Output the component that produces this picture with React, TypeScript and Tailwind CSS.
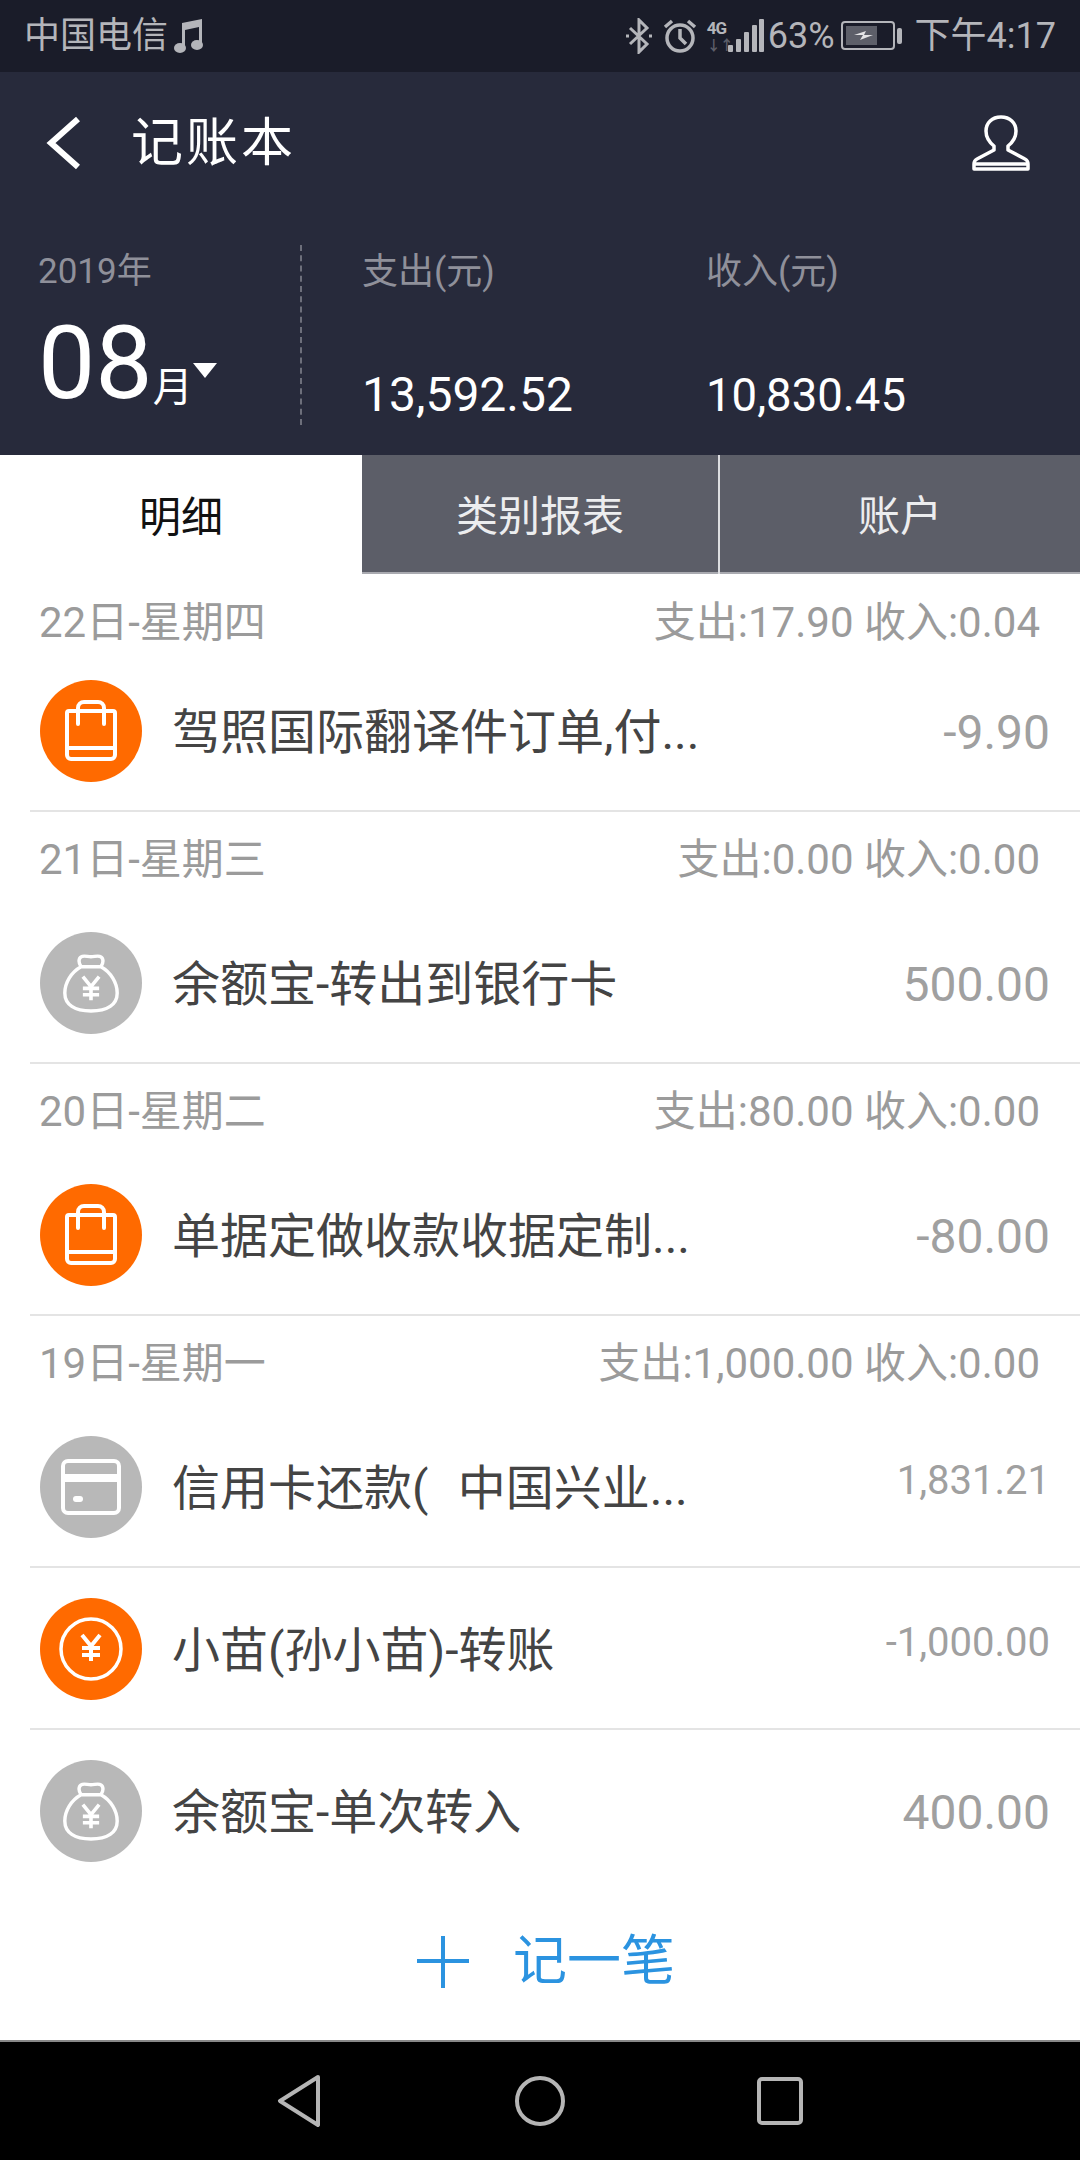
const cjk = { fontFamily: 'Roboto, "Noto Sans CJK SC", sans-serif' };

const BagIcon = () => (
  <svg width="60" height="62" viewBox="0 0 60 62" fill="none" stroke="#fff" strokeWidth="4" strokeLinejoin="round" strokeLinecap="round">
    <path d="M8 11h44a2 2 0 0 1 2 2v42a4 4 0 0 1-4 4H10a4 4 0 0 1-4-4V13a2 2 0 0 1 2-2z" />
    <path d="M6 48h48" />
    <path d="M17 24V8a6 6 0 0 1 6-6h14a6 6 0 0 1 6 6v16" />
  </svg>
);

const YenGlyph = ({ x, y }: { x: number; y: number }) => (
  <g transform={`translate(${x} ${y})`} stroke="#fff" strokeWidth="4" fill="none">
    <path d="M2 0l9 11 9-11M11 11v15M2 13h18M2 20h18" />
  </g>
);

const MoneyBagIcon = () => (
  <svg width="56" height="60" viewBox="0 0 62 66" fill="none" stroke="#fff" strokeWidth="3.8" strokeLinejoin="round">
    <path d="M20 15c-3-4-3-9 0-11 3-2 7 0 11 0s8-2 11 0c3 2 3 7 0 11" />
    <path d="M20 15C9 21 2 33 2 44c0 13 11 20 29 20s29-7 29-20c0-11-7-23-18-29z" />
    <YenGlyph x={20} y={26} />
  </svg>
);

const CardIcon = () => (
  <svg width="60" height="56" viewBox="0 0 60 56" fill="none">
    <rect x="2" y="2" width="56" height="52" rx="5" stroke="#fff" strokeWidth="4" />
    <path d="M2 19h56" stroke="#fff" strokeWidth="8" />
    <rect x="12" y="37" width="10" height="6" rx="3" fill="#fff" />
  </svg>
);

const CoinIcon = () => (
  <svg width="66" height="66" viewBox="0 0 66 66" fill="none">
    <circle cx="33" cy="33" r="30" stroke="#fff" strokeWidth="3.5" />
    <YenGlyph x={22} y={19} />
  </svg>
);

type Row = {
  title: string;
  amount: string;
  small?: boolean;
  kind: "bag" | "money" | "card" | "coin";
};

type Group = {
  date: string;
  summary: string;
  first?: boolean;
  rows: Row[];
};

const groups: Group[] = [
  {
    date: "22日-星期四",
    summary: "支出:17.90 收入:0.04",
    first: true,
    rows: [{ title: "驾照国际翻译件订单,付...", amount: "-9.90", kind: "bag" }],
  },
  {
    date: "21日-星期三",
    summary: "支出:0.00 收入:0.00",
    rows: [{ title: "余额宝-转出到银行卡", amount: "500.00", kind: "money" }],
  },
  {
    date: "20日-星期二",
    summary: "支出:80.00 收入:0.00",
    rows: [{ title: "单据定做收款收据定制...", amount: "-80.00", kind: "bag" }],
  },
  {
    date: "19日-星期一",
    summary: "支出:1,000.00 收入:0.00",
    rows: [
      { title: "信用卡还款(\u2002\u200A中国兴业...", amount: "1,831.21", small: true, kind: "card" },
      { title: "小苗(孙小苗)-转账", amount: "-1,000.00", small: true, kind: "coin" },
      { title: "余额宝-单次转入", amount: "400.00", kind: "money" },
    ],
  },
];

const RowIcon = ({ kind }: { kind: Row["kind"] }) => {
  const orange = kind === "bag" || kind === "coin";
  return (
    <div className={`w-[102px] h-[102px] rounded-full flex items-center justify-center shrink-0 ${orange ? "bg-[#ff6a00]" : "bg-[#b8b8b8]"}`}>
      {kind === "bag" && <BagIcon />}
      {kind === "money" && <MoneyBagIcon />}
      {kind === "card" && <CardIcon />}
      {kind === "coin" && <CoinIcon />}
    </div>
  );
};

const StatusBar = () => (
  <div className="h-[72px] bg-[#1a1c29] flex items-center pl-[24px] pr-[24px] text-[#b4b5ba] text-[36px] leading-none">
    <span>中国电信</span>
    <svg className="ml-[6px]" width="30" height="36" viewBox="0 0 30 36" fill="#b4b5ba">
      <path d="M8 5l20-4v25h-3V9L11 12v18H8z" />
      <ellipse cx="6" cy="30" rx="6" ry="5" />
      <ellipse cx="23" cy="27" rx="6" ry="5" />
    </svg>
    <div className="flex-1" />
    <svg width="28" height="36" viewBox="0 0 28 36" fill="none" stroke="#b4b5ba" strokeWidth="3">
      <path d="M5 10l17 16-8 8V2l8 8L5 26" />
      <path d="M1 18h3M24 18h3" />
    </svg>
    <svg className="ml-[10px]" width="34" height="36" viewBox="0 0 34 36" fill="none" stroke="#b4b5ba" strokeWidth="3.5">
      <circle cx="17" cy="20" r="13" />
      <path d="M17 11v9l6 6M2 9l7-6M32 9l-7-6" />
    </svg>
    <div className="ml-[10px] w-[21px] flex flex-col items-start text-[17px] leading-[17px] font-bold">
      <span className="tracking-[-1px]">4G</span>
      <span className="text-[#5d5f69] text-[14px] leading-[16px] tracking-[-1px]">↓↑</span>
    </div>
    <svg width="36" height="36" viewBox="0 0 36 36" fill="#b4b5ba">
      <rect x="0" y="27" width="5" height="7" rx="1" />
      <rect x="8" y="21" width="5" height="13" rx="1" />
      <rect x="16" y="14" width="5" height="20" rx="1" />
      <rect x="24" y="7" width="5" height="27" rx="1" />
      <rect x="31" y="1" width="5" height="33" rx="1" />
    </svg>
    <span className="ml-[4px]">63%</span>
    <svg className="ml-[6px]" width="62" height="32" viewBox="0 0 62 32" fill="none">
      <rect x="1" y="2" width="52" height="27" rx="3" stroke="#b4b5ba" strokeWidth="2" />
      <rect x="5" y="6" width="31" height="19" fill="#5d5f69" />
      <path d="M13 15l12-4-2 4h9l-13 5 3-5z" fill="#e4e4e6" />
      <rect x="56" y="8" width="5" height="16" rx="2" fill="#b4b5ba" />
    </svg>
    <span className="ml-[12px]">下午4:17</span>
  </div>
);

const Header = () => (
  <div className="bg-[#272a3b] h-[383px]">
    <div className="h-[142px] flex items-center pl-[46px] pr-[50px] text-white">
      <svg width="36" height="54" viewBox="0 0 36 54" fill="none" stroke="#fff" strokeWidth="6">
        <path d="M32 3L5 27l27 24" />
      </svg>
      <span className="ml-[49px] mt-[2px] text-[52px] leading-none tracking-[3px]">记账本</span>
      <div className="flex-1" />
      <svg width="58" height="56" viewBox="0 0 58 56" fill="none" stroke="#fff" strokeWidth="3.5" strokeLinejoin="round">
        <path d="M29 2c-9 0-15 6-15 14 0 6 3 11 8 15v4L5 44c-2 1-3 3-3 5v5h54v-5c0-2-1-4-3-5L36 35v-4c5-4 8-9 8-15 0-8-6-14-15-14z" />
        <path d="M3 49h52" />
      </svg>
    </div>
    <div className="flex pl-[38px]">
      <div className="w-[262px] h-[180px] mt-[31px] flex flex-col">
        <span className="text-[35px] leading-none text-[#8f909a] mt-[9px]">2019年</span>
        <div className="flex items-start mt-[12px] text-white">
          <span className="text-[102px] leading-[124px]">08</span>
          <span className="text-[40px] leading-none mt-[67px]">月</span>
          <svg className="mt-[62px]" width="24" height="15" viewBox="0 0 24 15" fill="#fff">
            <path d="M0 0h24L12 15z" />
          </svg>
        </div>
      </div>
      <div className="h-[180px] mt-[31px] border-l-2 border-dashed border-[#6d6f7b]" />
      <div className="w-[344px] ml-[60px] mt-[31px]">
        <div className="text-[36px] leading-none text-[#8f909a] mt-[9px]">支出(元)</div>
        <div className="text-[48px] leading-none text-white mt-[81px]">13,592.52</div>
      </div>
      <div className="mt-[31px]">
        <div className="text-[36px] leading-none text-[#8f909a] mt-[9px]">收入(元)</div>
        <div className="text-[45.5px] leading-none text-white mt-[83px]">10,830.45</div>
      </div>
    </div>
  </div>
);

const Tabs = () => (
  <div className="h-[119px] flex text-[42px] leading-none">
    <div className="w-[362px] bg-white text-[#111] flex items-center justify-center pt-[6px]">明细</div>
    <div className="w-[356px] bg-[#5c5e68] text-[#ecedef] flex items-center justify-center pt-[6px] border-b-2 border-[#a9aab0]">类别报表</div>
    <div className="w-[2px] bg-[#dcdde0]" />
    <div className="flex-1 bg-[#5c5e68] text-[#ecedef] flex items-center justify-center pt-[6px] border-b-2 border-[#a9aab0]">账户</div>
  </div>
);

const Ledger = () => (
  <div className="flex-1 bg-white overflow-hidden">
    {groups.map((g, i) => (
      <div key={g.date}>
        <div className={`flex justify-between items-center pl-[39px] pr-[40px] text-[42px] leading-none text-[#9b9b9b] ${g.first ? "h-[76px] pt-[22px]" : "h-[90px] pt-[6px]"}`}>
          <span>{g.date}</span>
          <span>{g.summary}</span>
        </div>
        {g.rows.map((r, j) => (
          <div key={r.title} className="pl-[40px] h-[162px] flex items-center relative">
            <RowIcon kind={r.kind} />
            <span className="ml-[30px] mt-[3px] text-[48px] leading-none text-[#444] flex-1 whitespace-nowrap">{r.title}</span>
            <span className={`pr-[30px] leading-none text-[#a0a0a0] ${r.small ? "text-[40px] -mt-[12px]" : "text-[48px] mt-[3px]"}`}>{r.amount}</span>
            {!(i === groups.length - 1 && j === g.rows.length - 1) && (
              <div className="absolute left-[30px] right-0 bottom-0 h-[2px] bg-[#e4e4e4]" />
            )}
          </div>
        ))}
      </div>
    ))}
  </div>
);

const AddEntry = () => (
  <div className="h-[148px] bg-white flex items-center justify-center pb-[8px] text-[#2b93e0] text-[54px] leading-none">
    <svg className="ml-[12px]" width="52" height="52" viewBox="0 0 52 52" stroke="#2b93e0" strokeWidth="4">
      <path d="M0 25h52M26 0v52" />
    </svg>
    <span className="ml-[44px]">记一笔</span>
  </div>
);

const NavBar = () => (
  <div className="h-[120px] bg-black border-t-2 border-[#888] flex items-center justify-center gap-[192px]">
    <svg width="46" height="52" viewBox="0 0 46 52" fill="none" stroke="#b5b5b5" strokeWidth="4" strokeLinejoin="round">
      <path d="M41 2L3 26l38 24z" />
    </svg>
    <svg width="50" height="52" viewBox="0 0 50 52" fill="none" stroke="#b5b5b5" strokeWidth="4">
      <circle cx="25" cy="26" r="23" />
    </svg>
    <svg width="46" height="48" viewBox="0 0 46 48" fill="none" stroke="#b5b5b5" strokeWidth="4">
      <rect x="2" y="2" width="42" height="44" rx="3" />
    </svg>
  </div>
);

export default function App() {
  return (
    <div className="w-[1080px] h-[2160px] flex flex-col overflow-hidden bg-white" style={cjk}>
      <StatusBar />
      <Header />
      <Tabs />
      <Ledger />
      <AddEntry />
      <NavBar />
    </div>
  );
}
